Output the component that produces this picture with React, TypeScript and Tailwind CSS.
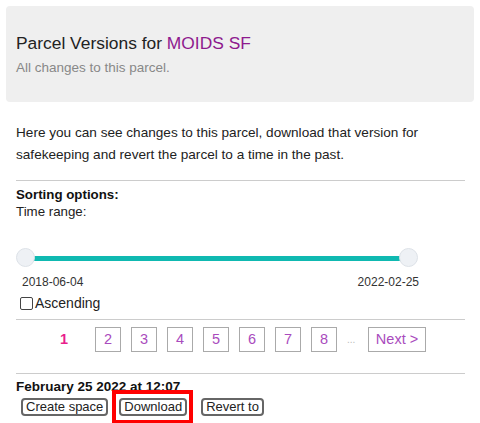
import React from "react";

export default function App() {
  const pages = ["2", "3", "4", "5", "6", "7", "8"];
  return (
    <div className="w-[480px] h-[423px] overflow-hidden bg-white font-['Liberation_Sans',Arial,sans-serif] text-[#222]">
      <div className="mx-[6px] mt-[6px] h-[96px] rounded-[4px] bg-[#efefef] pl-[10px] pt-[27px]">
        <div className="text-[17.4px] leading-[20px] text-[#222]">
          Parcel Versions for <span className="text-[#8e1a8e]">MOIDS SF</span>
        </div>
        <div className="mt-[7px] text-[13.5px] leading-[16px] text-[#888]">All changes to this parcel.</div>
      </div>
      <div className="pl-[16px] pr-[15px]">
        <p className="mt-[20px] text-[13.6px] leading-[22px] text-[#222]">
          Here you can see changes to this parcel, download that version for
          <br />
          safekeeping and revert the parcel to a time in the past.
        </p>
        <div className="mt-[14px] border-t border-[#cccccc]" />
        <div className="mt-[5px] text-[13.3px] leading-[17px] font-bold text-[#111]">Sorting options:</div>
        <div className="text-[13.3px] leading-[17px] text-[#222]">Time range:</div>
        <div className="relative mt-[28px] h-[20px] w-[404px]">
          <div className="absolute left-[10px] right-[11px] top-[8px] h-[5px] bg-[#0fb9b1]" />
          <div className="absolute left-0 top-0 h-[19px] w-[19px] rounded-full border border-[#dde2e8] bg-[#eef1f5]" />
          <div className="absolute right-[2px] top-0 h-[19px] w-[19px] rounded-full border border-[#dde2e8] bg-[#eef1f5]" />
        </div>
        <div className="mt-[7px] flex w-[404px] justify-between pl-[6px] pr-[1px] text-[12px] leading-[14px] text-[#333]">
          <span>2018-06-04</span>
          <span>2022-02-25</span>
        </div>
        <label className="mt-[5px] flex items-center text-[14px] leading-[18px] text-[#222]">
          <span className="ml-[4px] mr-[2px] inline-block h-[13px] w-[13px] rounded-[2px] border border-[#444] bg-white" />
          Ascending
        </label>
        <div className="mt-[7px] border-t border-[#cccccc]" />
        <div className="mt-[7px] flex items-center pl-[35px] text-[14.5px]">
          <span className="flex h-[25px] w-[26px] items-center justify-center font-bold text-[#e91e8c]">1</span>
          {pages.map((p, i) => (
            <span
              key={p}
              className={`${i === 0 ? "ml-[18px]" : "ml-[10px]"} flex h-[25px] w-[26px] items-center justify-center border border-[#aaaaaa] text-[#a94bbd]`}
            >
              {p}
            </span>
          ))}
          <span className="ml-[10px] w-[11px] text-[10px] leading-[25px] text-[#bbbbbb]">...</span>
          <span className="ml-[10px] flex h-[25px] w-[58px] items-center justify-center border border-[#aaaaaa] text-[#a94bbd]">
            Next &gt;
          </span>
        </div>
        <div className="mt-[21px] border-t border-[#cccccc]" />
        <div className="mt-[5px] text-[13.5px] leading-[16px] font-bold text-[#111]">February 25 2022 at 12:07</div>
        <div className="mt-[3px] flex items-center">
          <button className="ml-[5px] h-[18px] rounded-[4px] border-2 border-[#666] bg-white px-[3px] text-[13px] leading-[14px] text-[#222]">
            Create space
          </button>
          <span className="relative ml-[11px] flex">
            <button className="h-[18px] rounded-[4px] border-2 border-[#666] bg-white px-[3px] text-[13px] leading-[14px] text-[#222]">
              Download
            </button>
            <span className="pointer-events-none absolute -left-[7px] -right-[6px] -top-[8px] -bottom-[8px] border-[4px] border-[#ff0000]" />
          </span>
          <button className="ml-[14px] h-[18px] rounded-[4px] border-2 border-[#666] bg-white px-[3px] text-[13px] leading-[14px] text-[#222]">
            Revert to
          </button>
        </div>
      </div>
    </div>
  );
}
